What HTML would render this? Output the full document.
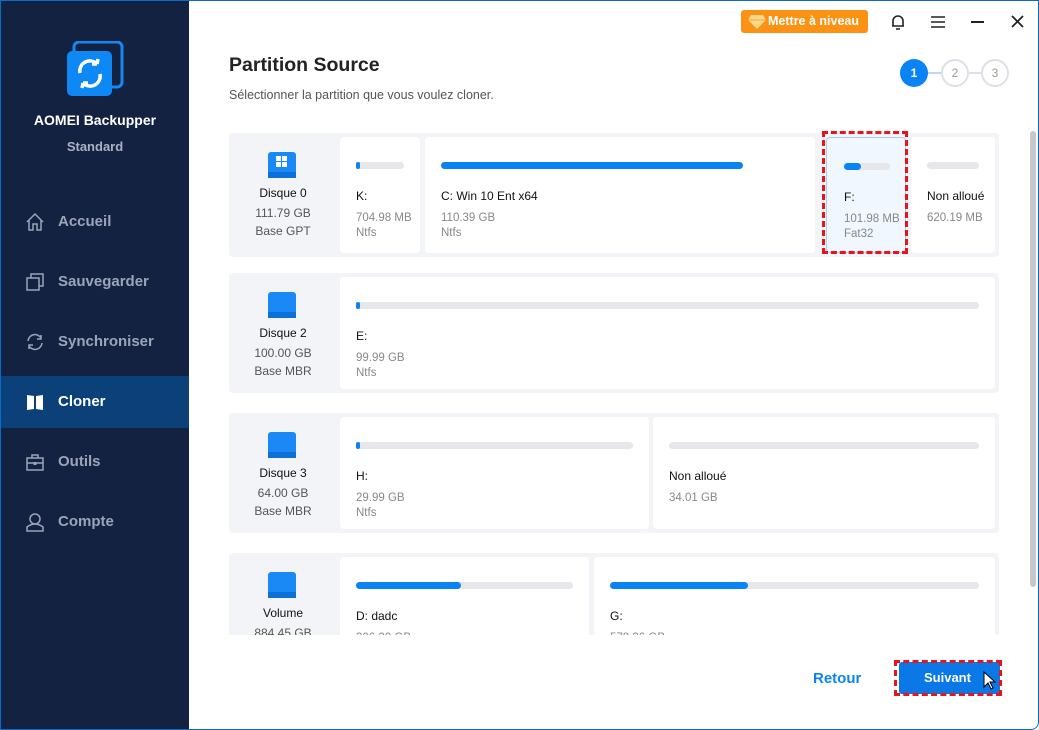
<!DOCTYPE html>
<html><head><meta charset="utf-8"><style>
*{margin:0;padding:0;box-sizing:border-box}
body{width:1039px;height:730px;overflow:hidden;font-family:"Liberation Sans",sans-serif;background:#fff;position:relative}
.a{position:absolute}
#win{position:absolute;left:0;top:0;width:1039px;height:730px;border:1px solid #0c6bc4;border-radius:0 0 8px 0;overflow:hidden;background:#fff}
#side{position:absolute;left:0;top:0;width:188px;height:730px;background:#142241}
.nav{position:absolute;left:0;width:188px;height:52px;color:#9aa5b8;font-size:15px;font-weight:bold;line-height:52px;padding-left:57px}
.nav svg{position:absolute;left:24px;top:16px}
.row{position:absolute;left:228px;width:770px;background:#f3f4f7;border-radius:4px}
.dl{position:absolute;left:0;width:108px;text-align:center;font-size:12px;color:#555}
.dl b{display:block;color:#111;font-size:12px;font-weight:normal;margin-bottom:6px}
.card{position:absolute;background:#fff;border-radius:4px}
.bar{position:absolute;left:16px;right:16px;top:25px;height:7px;border-radius:4px;background:#e6e7ea}
.bar i{display:block;height:7px;border-radius:4px;background:#0a84f5}
.nm{position:absolute;left:16px;top:52px;font-size:12px;color:#111}
.sz{position:absolute;left:16px;top:74px;font-size:11.5px;color:#888;line-height:15px}
</style></head><body>
<div id="win">
<div id="side">
 <svg class="a" style="left:64px;top:40px" width="60" height="58"><rect x="9" y="1" width="48" height="45" rx="5" fill="none" stroke="#1787f3" stroke-width="3"/><rect x="2" y="10" width="45" height="45" rx="5" fill="#0d88f4"/><path d="M15 32 a10 10 0 0 1 17-9 M32 23 l1-5 M32 23 l-5 0" stroke="#fff" stroke-width="3.5" fill="none"/><path d="M35 33 a10 10 0 0 1-17 9 M18 42 l-1 5 M18 42 l5 0" stroke="#fff" stroke-width="3.5" fill="none"/></svg>
 <div class="a" style="left:0;width:188px;top:111px;text-align:center;color:#fff;font-weight:bold;font-size:14px">AOMEI Backupper</div>
 <div class="a" style="left:0;width:188px;top:138px;text-align:center;color:#aab3c3;font-weight:bold;font-size:13px">Standard</div>
 <div class="nav" style="top:195px"><svg width="20" height="20"><path d="M2 10 L10 2 L18 10 M4 8 V18 H8 V12 H12 V18 H16 V8" fill="none" stroke="#9aa5b8" stroke-width="1.5"/></svg>Accueil</div>
 <div class="nav" style="top:255px"><svg width="20" height="20"><rect x="2" y="6" width="12" height="12" fill="none" stroke="#9aa5b8" stroke-width="1.5"/><path d="M6 6 V2 H18 V14 H14" fill="none" stroke="#9aa5b8" stroke-width="1.5"/></svg>Sauvegarder</div>
 <div class="nav" style="top:315px"><svg width="20" height="20"><path d="M3 9 a7 7 0 0 1 13-3 M16 3 v4 h-4 M17 11 a7 7 0 0 1-13 3 M4 17 v-4 h4" fill="none" stroke="#9aa5b8" stroke-width="1.5"/></svg>Synchroniser</div>
 <div class="a" style="left:0;top:375px;width:188px;height:52px;background:#0c4079"></div>
 <div class="nav" style="top:375px;color:#fff"><svg width="20" height="20"><path d="M2 3 L9 4 V17 L2 18Z M11 4 L18 3 V18 L11 17Z" fill="#fff"/></svg>Cloner</div>
 <div class="nav" style="top:435px"><svg width="20" height="20"><rect x="2" y="6" width="16" height="12" fill="none" stroke="#9aa5b8" stroke-width="1.5"/><path d="M7 6 V3 H13 V6 M2 11 H18" fill="none" stroke="#9aa5b8" stroke-width="1.5"/><rect x="8.5" y="10" width="3" height="3" fill="#9aa5b8"/></svg>Outils</div>
 <div class="nav" style="top:495px"><svg width="20" height="20"><circle cx="10" cy="7" r="5" fill="none" stroke="#9aa5b8" stroke-width="1.5"/><path d="M2 19 V15 Q10 9 18 15 V19Z" fill="none" stroke="#9aa5b8" stroke-width="1.5"/></svg>Compte</div>
</div>

<div class="a" style="left:740px;top:9px;width:127px;height:23px;border-radius:3px;background:#fb9214;color:#fff;font-size:12.5px;font-weight:bold;line-height:23px;padding-left:27px;white-space:nowrap">Mettre à niveau</div>
<svg class="a" style="left:747px;top:13px" width="18" height="16"><path d="M3 1 H15 L18 6 L9 15 L0 6Z" fill="#ffd88a"/><path d="M0 6 H18" stroke="#f7a93a"/></svg>
<svg class="a" style="left:888px;top:12px" width="18" height="18"><path d="M4 13 V8 a5 5 0 0 1 10 0 V13 H3 H15 M7 16 H11" fill="none" stroke="#222" stroke-width="1.6"/></svg>
<svg class="a" style="left:929px;top:14px" width="16" height="14"><path d="M1 2 H15 M1 7 H15 M1 12 H15" stroke="#222" stroke-width="1.6"/></svg>
<div class="a" style="left:970px;top:20px;width:13px;height:2px;background:#222"></div>
<svg class="a" style="left:1010px;top:14px" width="13" height="13"><path d="M1 1 L12 12 M12 1 L1 12" stroke="#222" stroke-width="1.8"/></svg>

<div class="a" style="left:228px;top:53px;font-size:19.5px;font-weight:bold;color:#222">Partition Source</div>
<div class="a" style="left:228px;top:87px;font-size:12.5px;color:#555">Sélectionner la partition que vous voulez cloner.</div>

<div class="a" style="left:926px;top:71px;width:16px;height:2px;background:#bcd6f3"></div>
<div class="a" style="left:966px;top:71px;width:16px;height:2px;background:#dde1e7"></div>
<div class="a" style="left:899px;top:58px;width:28px;height:28px;border-radius:50%;background:#0a84f5;color:#fff;font-size:12px;font-weight:bold;text-align:center;line-height:28px">1</div>
<div class="a" style="left:940px;top:58px;width:28px;height:28px;border-radius:50%;border:2px solid #dde1e7;color:#999;font-size:12px;text-align:center;line-height:24px">2</div>
<div class="a" style="left:980px;top:58px;width:28px;height:28px;border-radius:50%;border:2px solid #dde1e7;color:#999;font-size:12px;text-align:center;line-height:24px">3</div>

<div class="a" style="left:0;top:0;width:1039px;height:634px;overflow:hidden;pointer-events:none">
<div class="row" style="top:132px;height:124px">
 <svg class="a" style="left:38px;top:18px" width="30" height="30"><rect x="1" y="1" width="28" height="26" rx="3" fill="#1a88f5"/><rect x="1" y="21" width="28" height="6" fill="#0d6fd8"/><rect x="9" y="5" width="5" height="5" fill="#fff"/><rect x="15" y="5" width="5" height="5" fill="#fff"/><rect x="9" y="11" width="5" height="5" fill="#fff"/><rect x="15" y="11" width="5" height="5" fill="#fff"/></svg>
 <div class="dl" style="top:53px"><b>Disque 0</b>111.79 GB<br><span style="line-height:22px">Base GPT</span></div>
 <div class="card" style="left:111px;top:4px;width:80px;height:116px"><div class="bar"><i style="width:4px"></i></div><div class="nm">K:</div><div class="sz">704.98 MB<br>Ntfs</div></div>
 <div class="card" style="left:196px;top:4px;width:390px;height:116px"><div class="bar" style="right:72px"><i style="width:100%"></i></div><div class="nm">C: Win 10 Ent x64</div><div class="sz">110.39 GB<br>Ntfs</div></div>
 <div class="card" style="left:597px;top:4px;width:80px;height:116px;background:#f1f7fe;border:1px solid #a9ccf3"><div class="bar" style="left:17px;right:15px"><i style="width:17px"></i></div><div class="nm" style="left:17px">F:</div><div class="sz" style="left:17px">101.98 MB<br>Fat32</div></div>
 <div class="a" style="left:593px;top:-2px;width:86px;height:123px;border:3px dashed #e8141c"></div>
 <div class="card" style="left:682px;top:4px;width:84px;height:116px"><div class="bar"><i style="width:0"></i></div><div class="nm">Non alloué</div><div class="sz">620.19 MB</div></div>
</div>
<div class="row" style="top:272px;height:120px">
 <svg class="a" style="left:38px;top:18px" width="30" height="30"><rect x="1" y="1" width="28" height="26" rx="3" fill="#1a88f5"/><rect x="1" y="21" width="28" height="6" fill="#0d6fd8"/></svg>
 <div class="dl" style="top:53px"><b>Disque 2</b>100.00 GB<br><span style="line-height:22px">Base MBR</span></div>
 <div class="card" style="left:111px;top:4px;width:655px;height:112px"><div class="bar"><i style="width:4px"></i></div><div class="nm">E:</div><div class="sz">99.99 GB<br>Ntfs</div></div>
</div>
<div class="row" style="top:412px;height:120px">
 <svg class="a" style="left:38px;top:18px" width="30" height="30"><rect x="1" y="1" width="28" height="26" rx="3" fill="#1a88f5"/><rect x="1" y="21" width="28" height="6" fill="#0d6fd8"/></svg>
 <div class="dl" style="top:53px"><b>Disque 3</b>64.00 GB<br><span style="line-height:22px">Base MBR</span></div>
 <div class="card" style="left:111px;top:4px;width:309px;height:112px"><div class="bar"><i style="width:4px"></i></div><div class="nm">H:</div><div class="sz">29.99 GB<br>Ntfs</div></div>
 <div class="card" style="left:424px;top:4px;width:342px;height:112px"><div class="bar"><i style="width:0"></i></div><div class="nm">Non alloué</div><div class="sz">34.01 GB</div></div>
</div>
<div class="row" style="top:552px;height:120px">
 <svg class="a" style="left:38px;top:18px" width="30" height="30"><rect x="1" y="1" width="28" height="26" rx="3" fill="#1a88f5"/><rect x="1" y="21" width="28" height="6" fill="#0d6fd8"/></svg>
 <div class="dl" style="top:53px"><b>Volume</b>884.45 GB</div>
 <div class="card" style="left:111px;top:4px;width:249px;height:112px"><div class="bar"><i style="width:105px"></i></div><div class="nm">D: dadc</div><div class="sz">306.30 GB</div></div>
 <div class="card" style="left:365px;top:4px;width:401px;height:112px"><div class="bar"><i style="width:138px"></i></div><div class="nm">G:</div><div class="sz">578.36 GB</div></div>
</div>
</div>

<div class="a" style="left:1029px;top:130px;width:6px;height:456px;border-radius:3px;background:#c5c8cd"></div>

<div class="a" style="left:812px;top:669px;font-size:15px;font-weight:bold;color:#0a84f5">Retour</div>
<div class="a" style="left:898px;top:661px;width:101px;height:32px;border-radius:3px;background:#0a78e6;color:#fff;font-size:13px;font-weight:bold;line-height:32px;padding-left:25px">Suivant</div>
<div class="a" style="left:893px;top:659px;width:108px;height:36px;border:3px dashed #e8141c"></div>
<svg class="a" style="left:982px;top:670px" width="14" height="20"><path d="M1 1 L1 16 L5 12 L8 18 L10 17 L7 11 L12 11Z" fill="#fff" stroke="#000" stroke-width="1"/></svg>
</div>
</body></html>
